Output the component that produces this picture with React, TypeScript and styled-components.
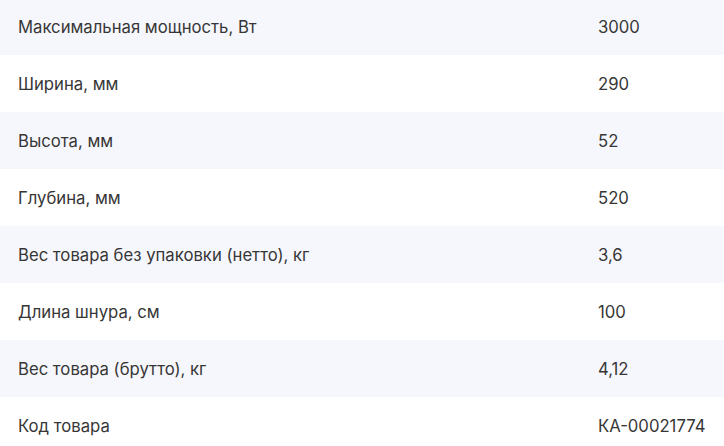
import React from "react";
import styled, { createGlobalStyle } from "styled-components";

const Global = createGlobalStyle`
  html, body { margin: 0; padding: 0; background: #ffffff; }
  body { font-family: "Inter", "Noto Sans", sans-serif; }
`;

const Table = styled.div`
  display: flex;
  flex-direction: column;
  margin-top: -2px;
`;

const Row = styled.div<{ $shaded: boolean }>`
  display: grid;
  grid-template-columns: 598px 1fr;
  align-items: center;
  height: 57px;
  background: ${(p) => (p.$shaded ? "#f6f7fc" : "#ffffff")};
  color: #363636;
  font-size: 16.7px;
  line-height: 24px;
  -webkit-font-smoothing: antialiased;
`;

const Label = styled.div`
  padding-left: 18px;
`;

const Value = styled.div`
  white-space: nowrap;
`;

const rows: [string, string][] = [
  ["Максимальная мощность, Вт", "3000"],
  ["Ширина, мм", "290"],
  ["Высота, мм", "52"],
  ["Глубина, мм", "520"],
  ["Вес товара без упаковки (нетто), кг", "3,6"],
  ["Длина шнура, см", "100"],
  ["Вес товара (брутто), кг", "4,12"],
  ["Код товара", "КА-00021774"],
];

export default function App() {
  return (
    <>
      <Global />
      <Table>
        {rows.map(([l, v], i) => (
          <Row key={l} $shaded={i % 2 === 0}>
            <Label>{l}</Label>
            <Value>{v}</Value>
          </Row>
        ))}
      </Table>
    </>
  );
}
